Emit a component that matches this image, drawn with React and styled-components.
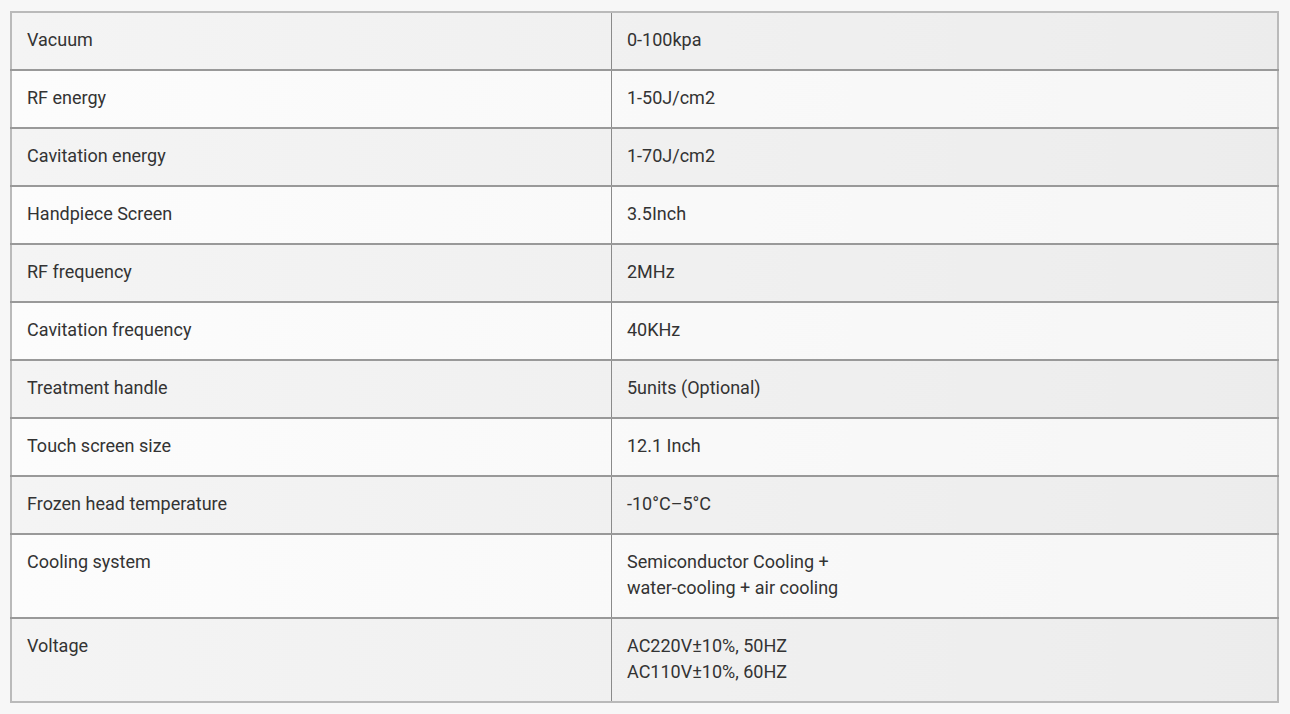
import React from 'react';
import styled, { createGlobalStyle } from 'styled-components';

const GlobalStyle = createGlobalStyle`
    body {
        margin: 0;
        background: #f7f7f7;
        font-family: Roboto, "Liberation Sans", Arial, sans-serif;
    }
`;

const Page = styled.div`
    padding: 11px 11px 0 10px;
`;

const SpecTable = styled.table`
    width: 1269px;
    border-collapse: collapse;
    border: 2px solid #bababa;
    table-layout: fixed;
`;

const Row = styled.tr`
    background: ${props => props.shaded
        ? 'linear-gradient(to right, #f4f4f4, #ececec)'
        : 'linear-gradient(to right, #fcfcfc, #f6f6f6)'};
    border-bottom: 2px solid #999;
    &:last-child {
        border-bottom: 2px solid #bababa;
    }
`;

const Cell = styled.td`
    padding: 14px 15px 16px 15px;
    vertical-align: top;
    font-size: 18px;
    line-height: 26px;
    color: #333;
    ${props => props.label && `
        width: 569px;
        border-right: 1px solid #8a8a8a;
    `}
`;

const specs = [
    ['Vacuum', ['0-100kpa']],
    ['RF energy', ['1-50J/cm2']],
    ['Cavitation energy', ['1-70J/cm2']],
    ['Handpiece Screen', ['3.5Inch']],
    ['RF frequency', ['2MHz']],
    ['Cavitation frequency', ['40KHz']],
    ['Treatment handle', ['5units (Optional)']],
    ['Touch screen size', ['12.1 Inch']],
    ['Frozen head temperature', ['-10°C–5°C']],
    ['Cooling system', ['Semiconductor Cooling +', 'water-cooling + air cooling']],
    ['Voltage', ['AC220V±10%, 50HZ', 'AC110V±10%, 60HZ']],
];

export default function App() {
    return (
        <Page>
            <GlobalStyle />
            <SpecTable>
                <tbody>
                    {specs.map(([name, values], idx) =>
                        <Row key={idx} shaded={idx % 2 === 0}>
                            <Cell label>{name}</Cell>
                            <Cell>
                                {values.map((v, i) => <div key={i}>{v}</div>)}
                            </Cell>
                        </Row>)}
                </tbody>
            </SpecTable>
        </Page>
    );
}
